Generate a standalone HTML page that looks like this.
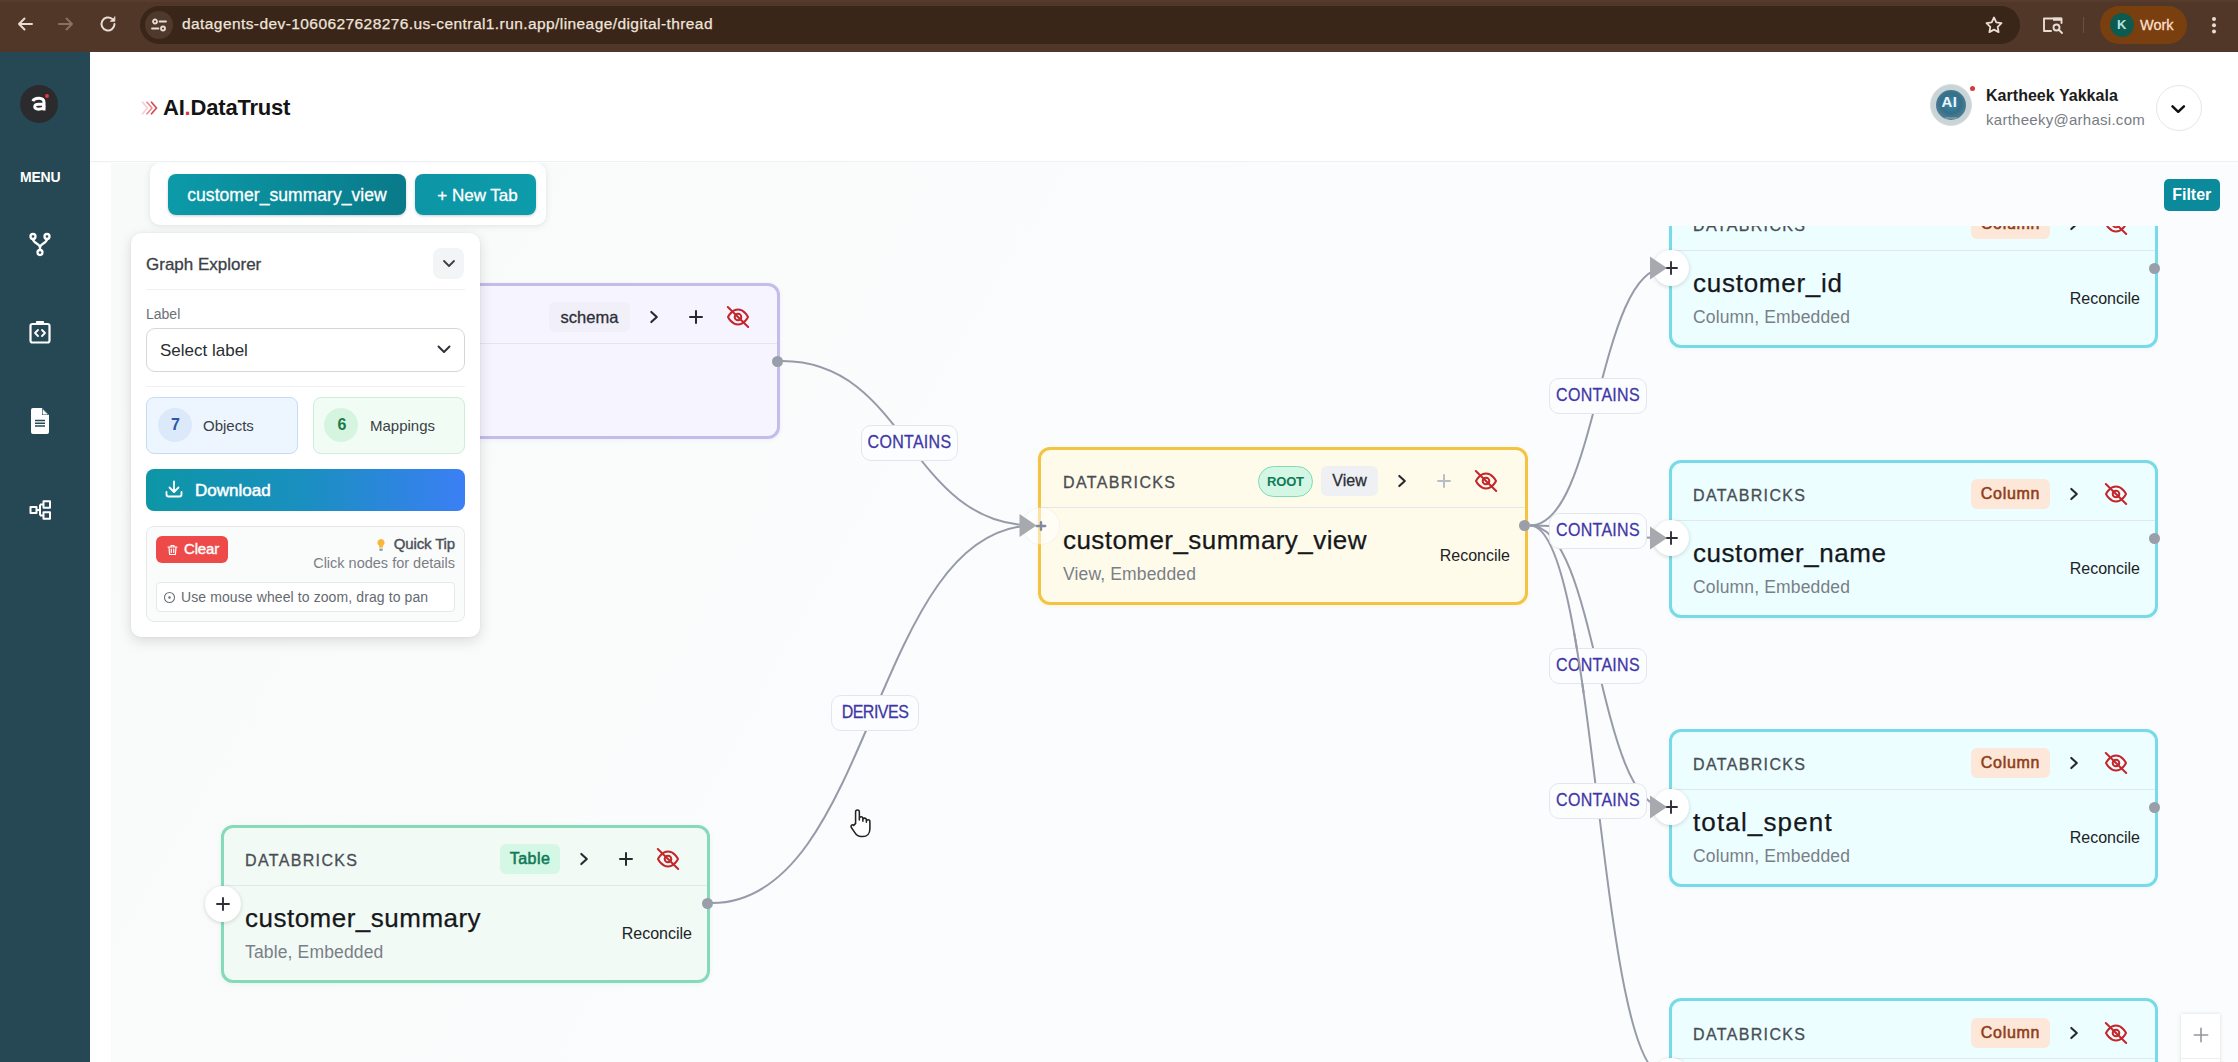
<!DOCTYPE html>
<html>
<head>
<meta charset="utf-8">
<title>AI.DataTrust</title>
<style>
*{box-sizing:border-box;margin:0;padding:0}
html,body{width:2238px;height:1062px;overflow:hidden;background:#fbfcfd;font-family:"Liberation Sans",sans-serif;}
.abs{position:absolute}
#chrome{position:absolute;left:0;top:0;width:2238px;height:52px;background:#513728}
#chrome .topstrip{position:absolute;left:0;top:0;width:2238px;height:2px;background:#573c2e}
#urlpill{position:absolute;left:140px;top:6px;width:1880px;height:38px;border-radius:19px;background:#3a2519}
#urltxt{-webkit-text-stroke:0.250px #efe4dc;position:absolute;left:182px;top:14px;font-size:15.5px;color:#efe4dc;letter-spacing:0.42px;white-space:nowrap;line-height:20px}
#side{position:absolute;left:0;top:52px;width:90px;height:1010px;background:#264854}
#hdr{position:absolute;left:90px;top:52px;width:2148px;height:110px;background:#fff;border-bottom:1px solid #eef0f2}
#canvas{position:absolute;left:90px;top:163px;width:2148px;height:899px;background:linear-gradient(120deg,#f8faf9 0%,#fbfcfd 45%,#fbfcfd 100%);overflow:hidden}
#strip{position:absolute;left:90px;top:163px;width:21px;height:899px;background:#fff}
.t{position:absolute;white-space:nowrap}
/* canvas coords: page x-90, page y-163 */
#tabs{position:absolute;left:60px;top:0px;width:396px;height:62px;background:#fff;border-radius:10px;box-shadow:0 1px 6px rgba(0,0,0,.10)}
.tab{-webkit-text-stroke:0.300px #fff;position:absolute;top:11px;height:41px;border-radius:8px;background:linear-gradient(90deg,#0c9aa9,#097a89);color:#fff;font-size:17px;line-height:43.500px;text-align:center;white-space:nowrap;box-shadow:0 1px 3px rgba(0,0,0,.2)}
#filter{position:absolute;left:2073.500px;top:16px;width:56.500px;height:32px;border-radius:5px;background:#0a8a9b;color:#fff;font-size:16px;font-weight:bold;line-height:32px;text-align:center}
#panel{position:absolute;left:41px;top:70px;width:349px;height:404px;background:#fff;border-radius:10px;box-shadow:0 4px 14px rgba(0,0,0,.13),0 0 2px rgba(0,0,0,.08)}
.node{position:absolute;width:489px;height:158px;border-radius:12px;border:3px solid #ccc}
.node .sep{position:absolute;left:0;right:0;top:57px;height:1px;background:#e3e6ea}
.node .src{-webkit-text-stroke:0.300px #474c52;position:absolute;left:21px;top:23.500px;font-size:16px;line-height:20px;color:#4a4f55;letter-spacing:1.350px;white-space:nowrap}
.node .ttl{-webkit-text-stroke:0.250px #16181b;position:absolute;left:21px;top:74px;font-size:26px;line-height:32px;color:#16181b;white-space:nowrap}
.node .sub{position:absolute;left:21px;top:113px;font-size:17.500px;letter-spacing:0.150px;line-height:22px;color:#7a7f86;white-space:nowrap}
.node .rec{position:absolute;right:15px;top:96.500px;font-size:16px;line-height:20px;color:#202226;white-space:nowrap}
.node .hrow{position:absolute;right:21px;top:16.500px;height:30px;display:flex;align-items:center;gap:6px}
.pill{height:30px;line-height:30px;border-radius:6px;font-size:16px;text-align:center;white-space:nowrap}
.ib{width:36px;height:30px;display:flex;align-items:center;justify-content:center}
.n-col{background:#ecfeff;border-color:#78dae7;box-shadow:0 1px 4px rgba(80,200,220,.12)}
.n-root .src,.n-root .ttl,.n-root .sub{left:22px}
.n-root{background:#fffbeb;border-color:#f3c444;box-shadow:0 1px 4px rgba(240,190,60,.14)}
.n-tab{background:#f2faf6;border-color:#86dab9;box-shadow:0 1px 4px rgba(100,210,170,.14)}
.n-sch{background:#f5f4ff;height:156.500px;border-color:#c4bce9;box-shadow:0 1px 4px rgba(180,160,240,.14)}
.p-col{width:79px;background:#fde7d9;color:#8f3d17;font-size:16px;letter-spacing:0.700px;-webkit-text-stroke:0.550px #8f3d17}
.p-view{width:57px;background:#eef0f3;color:#2b2f36;-webkit-text-stroke:0.300px #2b2f36}
.p-root{width:55px;height:31px;border-radius:16px;background:#d3f7e4;border:1px solid #7fdcb4;color:#0f7a57;font-weight:bold;font-size:13px;letter-spacing:-0.200px;line-height:29px;margin-right:2px}
.p-tab{width:60px;background:#d5f7e5;color:#0f7a57;font-size:16px;letter-spacing:0.450px;-webkit-text-stroke:0.550px #0f7a57}
.p-sch{width:81px;background:#f1eff8;color:#2b2f36;font-size:16.500px;-webkit-text-stroke:0.300px #2b2f36}
.hdot{position:absolute;width:11px;height:11px;border-radius:6px;background:#9a9ea8}
.plus{position:absolute;width:36px;height:36px;margin:-1px 0 0 -1px;border-radius:18px;background:#fff;box-shadow:0 1px 4px rgba(0,0,0,.16)}
.plus svg{margin:1px 0 0 1px}
.elab span{display:inline-block;transform:scaleY(1.120)}
.elab{-webkit-text-stroke:0.250px #3f37a5;position:absolute;height:36px;border-radius:10px;background:#fcfdff;border:1px solid #e3e6ec;color:#3f37a5;font-size:16px;line-height:32.500px;text-align:center;white-space:nowrap;letter-spacing:0.300px}

</style>
</head>
<body>
<div id="chrome"><div class="topstrip"></div>
  <div id="urlpill"></div>
  <!-- back -->
  <svg class="abs" style="left:15px;top:14px" width="20" height="20" viewBox="0 0 20 20" fill="none" stroke="#e9dcd2" stroke-width="2" stroke-linecap="round" stroke-linejoin="round"><path d="M17 10H4M9.5 4.5L4 10l5.5 5.500"/></svg>
  <!-- forward -->
  <svg class="abs" style="left:56px;top:14px" width="20" height="20" viewBox="0 0 20 20" fill="none" stroke="#8a6f62" stroke-width="2" stroke-linecap="round" stroke-linejoin="round"><path d="M3 10h13M10.500 4.500L16 10l-5.500 5.500"/></svg>
  <!-- reload -->
  <svg class="abs" style="left:98px;top:14px" width="20" height="20" viewBox="0 0 20 20" fill="none" stroke="#e9dcd2" stroke-width="2" stroke-linecap="round" stroke-linejoin="round"><path d="M16.500 10a6.500 6.500 0 1 1-2.200-4.900"/><path d="M16.800 2.800v4.400h-4.400" fill="#e9dcd2" stroke-width="1"/></svg>
  <!-- site-info circle -->
  <div class="abs" style="left:145px;top:11px;width:28px;height:28px;border-radius:14px;background:#4f382c"></div>
  <svg class="abs" style="left:150px;top:16px" width="18" height="18" viewBox="0 0 18 18" fill="none" stroke="#e9dcd2" stroke-width="1.800" stroke-linecap="round"><circle cx="5" cy="5.500" r="2"/><path d="M9.500 5.500H16"/><circle cx="13" cy="12.500" r="2"/><path d="M2 12.500h6.500"/></svg>
  <div id="urltxt">datagents-dev-1060627628276.us-central1.run.app/lineage/digital-thread</div>
  <!-- star -->
  <svg class="abs" style="left:1984.200px;top:14.500px" width="20" height="20" viewBox="0 0 20 20" fill="none" stroke="#e9dcd2" stroke-width="1.800" stroke-linejoin="round"><path d="M10 2.500l2.300 4.900 5.200.7-3.800 3.700.9 5.300L10 14.600l-4.600 2.500.9-5.300L2.500 8.100l5.200-.7z"/></svg>
  <!-- tab search icon -->
  <svg class="abs" style="left:2042px;top:15px" width="22" height="20" viewBox="0 0 22 20" fill="none" stroke="#e9dcd2" stroke-width="1.900" stroke-linejoin="round" stroke-linecap="round"><path d="M9 16H2V3.500h17.500V8"/><path d="M11 2.600h8.500v3.200H11z" fill="#e9dcd2" stroke="none"/><circle cx="14.500" cy="12.500" r="3"/><path d="M17 15l3 3"/></svg>
  <div class="abs" style="left:2083px;top:17px;width:1px;height:16px;background:#6a4f42"></div>
  <!-- profile pill -->
  <div class="abs" style="left:2100px;top:5.500px;width:87px;height:38.500px;border-radius:19.500px;background:#7a3f0e"></div>
  <div class="abs" style="left:2110px;top:13px;width:24px;height:24px;border-radius:12px;background:#0d5a4e"></div>
  <div class="t" style="left:2117px;top:16px;font-size:13px;font-weight:bold;color:#b4e3e1;line-height:18px">K</div>
  <div class="t" style="left:2140px;top:15px;font-size:14.500px;color:#fbdfc9;line-height:20px;-webkit-text-stroke:0.300px #fbdfc9">Work</div>
  <!-- kebab -->
  <div class="abs" style="left:2211.500px;top:16.600px;width:4px;height:4px;border-radius:2px;background:#e9dcd2;box-shadow:0 6.200px 0 #e9dcd2,0 12.400px 0 #e9dcd2"></div>
</div>
<div id="side">
  <div class="abs" style="left:20px;top:33px;width:38px;height:38px;border-radius:19px;background:#2b2b2e"></div>
  <svg class="abs" style="left:30px;top:44px" width="20" height="16" viewBox="0 0 20 16" fill="none" stroke="#fff" stroke-width="3" stroke-linecap="butt" stroke-linejoin="round"><path d="M2.800 5.200C4.500 1.600 14 0.800 14 6.500V14.500"/><path d="M14 8.200H8.500C3.500 8.200 3.500 13.200 8.200 13.200C11.500 13.200 14 11.800 14 9.500"/></svg>
  <div class="abs" style="left:44.500px;top:42px;width:4px;height:4px;border-radius:2px;background:#e23a3a"></div>
  <div class="t" style="left:20px;top:116px;font-size:14px;font-weight:bold;color:#fff;line-height:18px;letter-spacing:-0.200px">MENU</div>
  <!-- fork icon -->
  <svg class="abs" style="left:27px;top:178px" width="26" height="28" viewBox="0 0 26 28" fill="none" stroke="#fff" stroke-width="2.300" stroke-linecap="round"><circle cx="6" cy="6.500" r="2.500"/><circle cx="20" cy="6.500" r="2.500"/><circle cx="13" cy="22.500" r="2.500"/><path d="M6 9c0 4.500 7 4.500 7 8.500v2.500M20 9c0 4.500-7 4.500-7 8.500"/></svg>
  <!-- clipboard code icon -->
  <svg class="abs" style="left:28px;top:267px" width="24" height="26" viewBox="0 0 24 26" fill="none" stroke="#fff" stroke-width="2.200" stroke-linejoin="round" stroke-linecap="round"><rect x="2.500" y="5" width="19" height="18.500" rx="2"/><path d="M9 5V3h6v2" /><path d="M10 11l-3 3 3 3M14 11l3 3-3 3" stroke-width="1.800"/></svg>
  <!-- doc icon -->
  <svg class="abs" style="left:29px;top:355px" width="22" height="28" viewBox="0 0 22 28"><path d="M2 3a2 2 0 0 1 2-2h9l7 7v17a2 2 0 0 1-2 2H4a2 2 0 0 1-2-2z" fill="#fff"/><path d="M13 1v7h7z" fill="#264854"/><path d="M13.600 2.200l5.200 5.200h-5.200z" fill="#fff"/><path d="M6 13.500h10M6 16.300h10M6 19.100h10" stroke="#264854" stroke-width="1.500"/></svg>
  <!-- hierarchy icon -->
  <svg class="abs" style="left:29px;top:446px" width="24" height="24" viewBox="0 0 24 24" fill="none" stroke="#fff" stroke-width="2" stroke-linejoin="round"><rect x="1.500" y="9" width="6" height="6"/><rect x="14.500" y="3.200" width="6.500" height="6.500"/><rect x="14.500" y="14.300" width="6.500" height="6.500"/><path d="M7.500 12h3.500M11 6.500v11M11 6.500h3.500M11 17.500h3.500"/></svg>
</div>
<div id="hdr">
  <!-- logo chevrons -->
  <svg class="abs" style="left:51px;top:47.500px" width="18" height="16" viewBox="0 0 18 16" fill="none" stroke-width="1.700" stroke-linecap="round" stroke-linejoin="round"><path d="M1.500 2.200L6.500 8l-5 5.800" stroke="#f6cfd1"/><path d="M6 2.200L11 8l-5 5.800" stroke="#ea8d92"/><path d="M10.500 2.200L15.500 8l-5 5.800" stroke="#d9484f"/></svg>
  <div class="t" style="left:73px;top:42px;font-size:22px;font-weight:bold;color:#141414;line-height:28px;letter-spacing:-0.200px">AI<span style="color:#d9363e">.</span>DataTrust</div>
  <!-- avatar -->
  <div class="abs" style="left:1839.500px;top:32px;width:42px;height:42px;border-radius:21px;background:#c9d4d7;border:1px solid #d9dfe1"></div>
  <div class="abs" style="left:1846px;top:37.500px;width:30px;height:30px;border-radius:15px;background:radial-gradient(circle at 50% 45%,#3b88a6 0,#346f8a 45%,#567f92 75%,#8fa9b3 100%)"></div>
  <div class="t" style="left:1851.500px;top:41px;font-size:15px;font-weight:bold;color:#eef7fb;line-height:18px;letter-spacing:0.300px">AI</div>
  <div class="abs" style="left:1855px;top:64.500px;width:12px;height:2px;background:#7f9aa6;opacity:.8"></div>
  <div class="abs" style="left:1879.500px;top:34px;width:5px;height:5px;border-radius:3px;background:#d23b3b"></div>
  <div class="t" style="left:1896px;top:34px;font-size:16px;font-weight:bold;color:#1c1c1c;line-height:20px;letter-spacing:0.030px">Kartheek Yakkala</div>
  <div class="t" style="left:1896px;top:57.500px;font-size:15px;color:#777c82;line-height:20px;letter-spacing:0.270px">kartheeky@arhasi.com</div>
  <div class="abs" style="left:2065.500px;top:32.500px;width:46px;height:46px;border-radius:23px;border:1.500px solid #e4e6e8;background:#fff"></div>
  <svg class="abs" style="left:2080.300px;top:49.500px" width="17" height="14" viewBox="0 0 17 14" fill="none" stroke="#111" stroke-width="2.500" stroke-linecap="round" stroke-linejoin="round"><path d="M2.500 4.300l5.700 5.500 5.700-5.500"/></svg>
</div>
<div id="canvas">
<div class="abs" style="left:0;top:0;width:21px;height:899px;background:#fff"></div>
<svg class="abs" style="left:0;top:0" width="2148" height="899" viewBox="0 0 2148 899"><g fill="none" stroke="#959ba8" stroke-width="2"><path d="M692.0 198.0 C818.0 198.0 818.0 362.5 944.0 362.5"/><path d="M622.0 740.0 C783.0 740.0 783.0 362.5 944.0 362.5"/><path d="M1440.0 362.5 C1507.5 362.5 1507.5 105.0 1575.0 105.0"/><path d="M1440.0 362.5 C1507.5 362.5 1507.5 375.0 1575.0 375.0"/><path d="M1440.0 362.5 C1507.5 362.5 1507.5 644.0 1575.0 644.0"/><path d="M1440.0 362.5 C1507.5 362.5 1507.5 913.0 1575.0 913.0"/></g></svg>
<div class="abs" style="left:0;top:62.500px;width:2148px;height:837px;overflow:hidden"><div class="abs" style="left:0;top:-62.500px;width:2148px;height:899px"><div class="node n-col" style="left:1579px;top:26.5px"><div class="src">DATABRICKS</div><div class="hrow"><div class="pill p-col">Column</div><div class="ib"><svg width="12" height="18" viewBox="0 0 12 18" fill="none" stroke="#26292e" stroke-width="2.100" stroke-linecap="round" stroke-linejoin="round"><path d="M3.300 3.900L8.800 9l-5.500 5.100"/></svg></div><div class="ib"><svg width="24" height="24" viewBox="0 0 24 24" fill="none" stroke="#c4262b" stroke-width="2" stroke-linecap="round" stroke-linejoin="round"><path d="M2 12s3.600-7.400 10-7.400S22 12 22 12s-3.600 7.400-10 7.400S2 12 2 12z"/><circle cx="12" cy="12" r="3.300"/><path d="M1.800 2l20.400 20"/></svg></div></div><div class="sep"></div><div class="ttl" style="letter-spacing:0.74px">customer_id</div><div class="sub">Column, Embedded</div><div class="rec">Reconcile</div></div>
<div class="node n-col" style="left:1579px;top:296.5px"><div class="src">DATABRICKS</div><div class="hrow"><div class="pill p-col">Column</div><div class="ib"><svg width="12" height="18" viewBox="0 0 12 18" fill="none" stroke="#26292e" stroke-width="2.100" stroke-linecap="round" stroke-linejoin="round"><path d="M3.300 3.900L8.800 9l-5.500 5.100"/></svg></div><div class="ib"><svg width="24" height="24" viewBox="0 0 24 24" fill="none" stroke="#c4262b" stroke-width="2" stroke-linecap="round" stroke-linejoin="round"><path d="M2 12s3.600-7.400 10-7.400S22 12 22 12s-3.600 7.400-10 7.400S2 12 2 12z"/><circle cx="12" cy="12" r="3.300"/><path d="M1.800 2l20.400 20"/></svg></div></div><div class="sep"></div><div class="ttl" style="letter-spacing:0.55px">customer_name</div><div class="sub">Column, Embedded</div><div class="rec">Reconcile</div></div>
<div class="node n-col" style="left:1579px;top:565.5px"><div class="src">DATABRICKS</div><div class="hrow"><div class="pill p-col">Column</div><div class="ib"><svg width="12" height="18" viewBox="0 0 12 18" fill="none" stroke="#26292e" stroke-width="2.100" stroke-linecap="round" stroke-linejoin="round"><path d="M3.300 3.900L8.800 9l-5.500 5.100"/></svg></div><div class="ib"><svg width="24" height="24" viewBox="0 0 24 24" fill="none" stroke="#c4262b" stroke-width="2" stroke-linecap="round" stroke-linejoin="round"><path d="M2 12s3.600-7.400 10-7.400S22 12 22 12s-3.600 7.400-10 7.400S2 12 2 12z"/><circle cx="12" cy="12" r="3.300"/><path d="M1.800 2l20.400 20"/></svg></div></div><div class="sep"></div><div class="ttl" style="letter-spacing:1.14px">total_spent</div><div class="sub">Column, Embedded</div><div class="rec">Reconcile</div></div>
<div class="node n-col" style="left:1579px;top:835px"><div class="src">DATABRICKS</div><div class="hrow"><div class="pill p-col">Column</div><div class="ib"><svg width="12" height="18" viewBox="0 0 12 18" fill="none" stroke="#26292e" stroke-width="2.100" stroke-linecap="round" stroke-linejoin="round"><path d="M3.300 3.900L8.800 9l-5.500 5.100"/></svg></div><div class="ib"><svg width="24" height="24" viewBox="0 0 24 24" fill="none" stroke="#c4262b" stroke-width="2" stroke-linecap="round" stroke-linejoin="round"><path d="M2 12s3.600-7.400 10-7.400S22 12 22 12s-3.600 7.400-10 7.400S2 12 2 12z"/><circle cx="12" cy="12" r="3.300"/><path d="M1.800 2l20.400 20"/></svg></div></div><div class="sep"></div><div class="ttl" style="letter-spacing:0.62px">customer_tier</div><div class="sub">Column, Embedded</div><div class="rec">Reconcile</div></div>
</div></div>
<div class="node n-sch" style="left:201px;top:119.5px"><div class="src"></div><div class="hrow"><div class="pill p-sch">schema</div><div class="ib"><svg width="12" height="18" viewBox="0 0 12 18" fill="none" stroke="#26292e" stroke-width="2.100" stroke-linecap="round" stroke-linejoin="round"><path d="M3.300 3.900L8.800 9l-5.500 5.100"/></svg></div><div class="ib"><svg width="18" height="18" viewBox="0 0 18 18" fill="none" stroke="#26292e" stroke-width="2" stroke-linecap="round"><path d="M9 3v12M3 9h12"/></svg></div><div class="ib"><svg width="24" height="24" viewBox="0 0 24 24" fill="none" stroke="#c4262b" stroke-width="2" stroke-linecap="round" stroke-linejoin="round"><path d="M2 12s3.600-7.400 10-7.400S22 12 22 12s-3.600 7.400-10 7.400S2 12 2 12z"/><circle cx="12" cy="12" r="3.300"/><path d="M1.800 2l20.400 20"/></svg></div></div><div class="sep"></div><div class="ttl"></div><div class="sub"></div></div>
<div class="node n-root" style="left:948px;top:283.5px;width:490px"><div class="src">DATABRICKS</div><div class="hrow"><div class="pill p-root">ROOT</div><div class="pill p-view">View</div><div class="ib"><svg width="12" height="18" viewBox="0 0 12 18" fill="none" stroke="#26292e" stroke-width="2.100" stroke-linecap="round" stroke-linejoin="round"><path d="M3.300 3.900L8.800 9l-5.500 5.100"/></svg></div><div class="ib"><svg width="18" height="18" viewBox="0 0 18 18" fill="none" stroke="#b9bdc4" stroke-width="2" stroke-linecap="round"><path d="M9 3v12M3 9h12"/></svg></div><div class="ib"><svg width="24" height="24" viewBox="0 0 24 24" fill="none" stroke="#c4262b" stroke-width="2" stroke-linecap="round" stroke-linejoin="round"><path d="M2 12s3.600-7.400 10-7.400S22 12 22 12s-3.600 7.400-10 7.400S2 12 2 12z"/><circle cx="12" cy="12" r="3.300"/><path d="M1.800 2l20.400 20"/></svg></div></div><div class="sep"></div><div class="ttl" style="letter-spacing:0.44px">customer_summary_view</div><div class="sub">View, Embedded</div><div class="rec">Reconcile</div></div>
<div class="node n-tab" style="left:131px;top:661.5px"><div class="src">DATABRICKS</div><div class="hrow"><div class="pill p-tab">Table</div><div class="ib"><svg width="12" height="18" viewBox="0 0 12 18" fill="none" stroke="#26292e" stroke-width="2.100" stroke-linecap="round" stroke-linejoin="round"><path d="M3.300 3.900L8.800 9l-5.500 5.100"/></svg></div><div class="ib"><svg width="18" height="18" viewBox="0 0 18 18" fill="none" stroke="#26292e" stroke-width="2" stroke-linecap="round"><path d="M9 3v12M3 9h12"/></svg></div><div class="ib"><svg width="24" height="24" viewBox="0 0 24 24" fill="none" stroke="#c4262b" stroke-width="2" stroke-linecap="round" stroke-linejoin="round"><path d="M2 12s3.600-7.400 10-7.400S22 12 22 12s-3.600 7.400-10 7.400S2 12 2 12z"/><circle cx="12" cy="12" r="3.300"/><path d="M1.800 2l20.400 20"/></svg></div></div><div class="sep"></div><div class="ttl" style="letter-spacing:0.49px">customer_summary</div><div class="sub">Table, Embedded</div><div class="rec">Reconcile</div></div>
<div class="hdot" style="left:682px;top:193px"></div><div class="hdot" style="left:1429px;top:357px"></div><div class="hdot" style="left:612px;top:735px"></div><div class="hdot" style="left:2059px;top:100px"></div><div class="hdot" style="left:2059px;top:370px"></div><div class="hdot" style="left:2059px;top:639px"></div><div class="hdot" style="left:2059px;top:908px"></div><div class="plus" style="left:1564.0px;top:88.0px"><svg class="abs" style="left:9px;top:9px" width="16" height="16" viewBox="0 0 16 16" fill="none" stroke="#2d3036" stroke-width="1.900" stroke-linecap="round"><path d="M8 2v12M2 8h12"/></svg></div><div class="plus" style="left:1564.0px;top:358.0px"><svg class="abs" style="left:9px;top:9px" width="16" height="16" viewBox="0 0 16 16" fill="none" stroke="#2d3036" stroke-width="1.900" stroke-linecap="round"><path d="M8 2v12M2 8h12"/></svg></div><div class="plus" style="left:1564.0px;top:627.0px"><svg class="abs" style="left:9px;top:9px" width="16" height="16" viewBox="0 0 16 16" fill="none" stroke="#2d3036" stroke-width="1.900" stroke-linecap="round"><path d="M8 2v12M2 8h12"/></svg></div><div class="plus" style="left:1564.0px;top:896.0px"><svg class="abs" style="left:9px;top:9px" width="16" height="16" viewBox="0 0 16 16" fill="none" stroke="#2d3036" stroke-width="1.900" stroke-linecap="round"><path d="M8 2v12M2 8h12"/></svg></div><div class="plus" style="left:115.5px;top:724.0px"><svg class="abs" style="left:9px;top:9px" width="16" height="16" viewBox="0 0 16 16" fill="none" stroke="#2d3036" stroke-width="1.900" stroke-linecap="round"><path d="M8 2v12M2 8h12"/></svg></div><div class="plus" style="left:934.0px;top:345.5px;background:rgba(255,255,255,.5);box-shadow:0 0 0 1px rgba(225,227,231,.35)"><svg class="abs" style="left:9px;top:9px" width="16" height="16" viewBox="0 0 16 16" fill="none" stroke="#8289a0" stroke-width="2.400" stroke-linecap="round"><path d="M8 4.200v7.600M3.800 8h8.400"/></svg></div><svg class="abs" style="left:0;top:0" width="2148" height="899" viewBox="0 0 2148 899"><g fill="#a8a9ae"><path d="M946.5 362.5 l-17 -11.500 v23z"/><path d="M1577.0 105.0 l-17 -11.500 v23z"/><path d="M1577.0 375.0 l-17 -11.500 v23z"/><path d="M1577.0 644.0 l-17 -11.500 v23z"/><path d="M1577.0 913.0 l-17 -11.500 v23z"/></g></svg><div class="elab" style="left:771px;top:262px;width:97px"><span>CONTAINS</span></div><div class="elab" style="left:741px;top:532px;width:88px;letter-spacing:-0.500px"><span>DERIVES</span></div><div class="elab" style="left:1459px;top:215px;width:98px"><span>CONTAINS</span></div><div class="elab" style="left:1459px;top:350px;width:98px"><span>CONTAINS</span></div><div class="elab" style="left:1459px;top:485px;width:98px"><span>CONTAINS</span></div><svg class="abs" style="left:1440px;top:470px" width="140" height="60" viewBox="1440 470 140 60"><g fill="none" stroke="#959ba8" stroke-width="2"><path d="M1440.0 362.5 C1507.5 362.5 1507.5 913.0 1575.0 913.0"/></g></svg><div class="elab" style="left:1459px;top:620px;width:98px"><span>CONTAINS</span></div>
<div id="tabs"><div class="tab" style="left:18px;width:238px;font-size:17.5px;letter-spacing:0.050px">customer_summary_view</div><div class="tab" style="left:265px;width:121px;padding-left:4px;background:linear-gradient(90deg,#0c95a5,#0d9cab)">+ New Tab</div></div>
<div id="filter">Filter</div>
<div class="abs" style="left:2091px;top:851px;width:39px;height:60px;background:#fff;box-shadow:0 0 4px rgba(0,0,0,.13)"><svg class="abs" style="left:10.500px;top:11.500px" width="18" height="18" viewBox="0 0 18 18" fill="none" stroke="#94979d" stroke-width="1.600" stroke-linecap="round"><path d="M9 2.300v13.400M2.300 9h13.400"/></svg><div class="abs" style="left:0;top:44px;width:39px;height:1px;background:#eceef0"></div></div>
<svg class="abs" style="left:758.500px;top:644.500px" width="24.200" height="30.800" viewBox="0 0 22 28" fill="#fff" stroke="#222" stroke-width="1.400" stroke-linejoin="round" stroke-linecap="round"><path d="M6 14V3.500a1.700 1.700 0 0 1 3.400 0V11v-1.500a1.600 1.600 0 0 1 3.200 0V12v-1.200a1.600 1.600 0 0 1 3.200 0V13v-.800a1.600 1.600 0 0 1 3.200 0V19c0 4-2.500 7-6.500 7h-1.500c-3 0-4.500-1.500-6-4L2 17.500c-.800-1.500 1-3 2.300-1.700z"/></svg>
<div id="panel">
  <div class="t" style="left:15px;top:22px;font-size:17px;line-height:20px;color:#3c4046;-webkit-text-stroke:0.300px #3c4046">Graph Explorer</div>
  <div class="abs" style="left:302px;top:15px;width:31px;height:31px;border-radius:8px;background:#f2f4f6"></div>
  <svg class="abs" style="left:310px;top:24px" width="16" height="14" viewBox="0 0 16 14" fill="none" stroke="#3a3f46" stroke-width="1.800" stroke-linecap="round" stroke-linejoin="round"><path d="M3 4l5 5 5-5"/></svg>
  <div class="abs" style="left:15px;top:56px;width:319px;height:1px;background:#eef0f2"></div>
  <div class="t" style="left:15px;top:73px;font-size:14px;line-height:16px;color:#6b7077">Label</div>
  <div class="abs" style="left:15px;top:95px;width:319px;height:44px;border-radius:9px;border:1px solid #d3d7dc;background:#fff"></div>
  <div class="t" style="left:29px;top:108px;font-size:17px;line-height:20px;color:#2a2d31">Select label</div>
  <svg class="abs" style="left:305px;top:110px" width="16" height="14" viewBox="0 0 16 14" fill="none" stroke="#2f3338" stroke-width="2" stroke-linecap="round" stroke-linejoin="round"><path d="M2.500 3.500L8 9l5.500-5.500"/></svg>
  <div class="abs" style="left:15px;top:153px;width:319px;height:1px;background:#eef0f2"></div>
  <div class="abs" style="left:15px;top:164px;width:152px;height:57px;border-radius:8px;border:1px solid #c5dcf7;background:#edf5fe"></div>
  <div class="abs" style="left:27px;top:175px;width:34px;height:34px;border-radius:17px;background:#dce9fb"></div>
  <div class="t" style="left:40px;top:182px;font-size:16px;font-weight:bold;line-height:20px;color:#2c56a8">7</div>
  <div class="t" style="left:72px;top:184px;font-size:15px;line-height:18px;color:#3a3f46">Objects</div>
  <div class="abs" style="left:182px;top:164px;width:152px;height:57px;border-radius:8px;border:1px solid #cdeed9;background:#f0fcf4"></div>
  <div class="abs" style="left:193px;top:175px;width:34px;height:34px;border-radius:17px;background:#d6f5e1"></div>
  <div class="t" style="left:206.500px;top:182px;font-size:16px;font-weight:bold;line-height:20px;color:#1d7a4c">6</div>
  <div class="t" style="left:239px;top:184px;font-size:15px;line-height:18px;color:#3a3f46">Mappings</div>
  <div class="abs" style="left:15px;top:236px;width:319px;height:42px;border-radius:8px;background:linear-gradient(90deg,#0d96a6 0%,#1a8fc0 50%,#3b7ff5 100%)"></div>
  <svg class="abs" style="left:33px;top:246px" width="20" height="20" viewBox="0 0 20 20" fill="none" stroke="#fff" stroke-width="1.800" stroke-linecap="round" stroke-linejoin="round"><path d="M10 2.500v10M5.500 8.500L10 13l4.500-4.500M2.500 13v2.500a2 2 0 0 0 2 2h11a2 2 0 0 0 2-2V13"/></svg>
  <div class="t" style="left:64px;top:248px;font-size:17px;-webkit-text-stroke:0.500px #fff;line-height:20px;color:#fff">Download</div>
  <div class="abs" style="left:15px;top:293px;width:319px;height:96px;border-radius:8px;border:1px solid #e6e8eb;background:#fafbfb"></div>
  <div class="abs" style="left:25px;top:303px;width:72px;height:27px;border-radius:6px;background:#ee4a4a"></div>
  <svg class="abs" style="left:36px;top:311px" width="11" height="12" viewBox="0 0 11 12" fill="none" stroke="#fff" stroke-width="1.200" stroke-linecap="round" stroke-linejoin="round"><path d="M1 3h9M4 3V1.500h3V3M2 3l.600 7.500h5.800L9 3M4.300 5v3.500M6.700 5v3.500"/></svg>
  <div class="t" style="left:53px;top:307px;font-size:15px;letter-spacing:-0.150px;-webkit-text-stroke:0.400px #fff;line-height:18px;color:#fff">Clear</div>
  <svg class="abs" style="left:245px;top:305px" width="10" height="14" viewBox="0 0 10 14"><path d="M5 1a3.600 3.600 0 0 0-2 6.600V9.500h4V7.600A3.600 3.600 0 0 0 5 1z" fill="#f5b83a"/><path d="M3.300 10.500h3.400v1.500a1 1 0 0 1-1 1H4.300a1 1 0 0 1-1-1z" fill="#9aa0a8"/></svg>
  <div class="t" style="right:25px;top:302px;font-size:15px;letter-spacing:-0.150px;-webkit-text-stroke:0.400px #4b5058;line-height:18px;color:#4b5058">Quick Tip</div>
  <div class="t" style="right:25px;top:321px;font-size:14.500px;line-height:18px;color:#7a7f86">Click nodes for details</div>
  <div class="abs" style="left:25px;top:349px;width:299px;height:30px;border-radius:4px;border:1px solid #e6e8eb;background:#fff"></div>
  <svg class="abs" style="left:32px;top:358px" width="13" height="13" viewBox="0 0 13 13" fill="none" stroke="#6b7077" stroke-width="1.100"><circle cx="6.500" cy="6.500" r="5"/><circle cx="6.500" cy="6.500" r="0.700" fill="#6b7077"/></svg>
  <div class="t" style="left:50px;top:355px;font-size:14px;line-height:18px;letter-spacing:0.100px;color:#656a71">Use mouse wheel to zoom, drag to pan</div>
</div>
</div>
</body>
</html>
